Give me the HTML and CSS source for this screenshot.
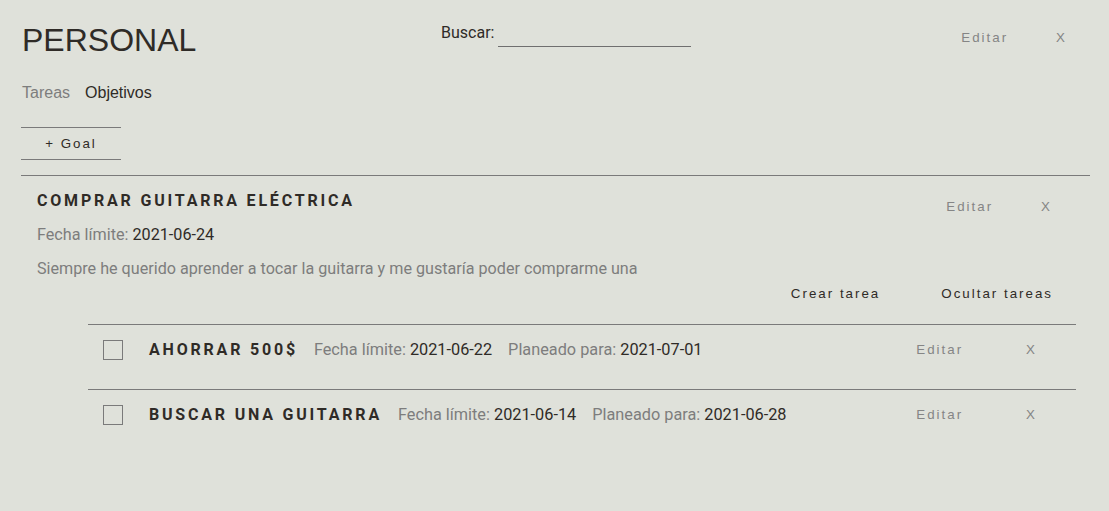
FILE: index.html
```html
<!DOCTYPE html>
<html lang="es">
<head>
<meta charset="utf-8">
<title>Personal</title>
<link rel="stylesheet" href="styles.css">
</head>
<body>
<div class="page">
  <header class="top">
    <h1 class="board-title">PERSONAL</h1>
    <div class="search">
      <label class="search-label" for="q">Buscar:</label>
      <input class="search-input" id="q" type="text">
    </div>
    <div class="actions top-actions">
      <button class="btn btn-muted">Editar</button>
      <button class="btn btn-muted">X</button>
    </div>
  </header>

  <nav class="tabs">
    <span class="tab">Tareas</span>
    <span class="tab tab-active">Objetivos</span>
  </nav>

  <button class="add-goal">+ Goal</button>

  <section class="goal">
    <div class="goal-head">
      <h2 class="goal-title">COMPRAR GUITARRA ELÉCTRICA</h2>
      <div class="actions">
        <button class="btn btn-muted">Editar</button>
        <button class="btn btn-muted">X</button>
      </div>
    </div>
    <p class="meta"><span class="meta-label">Fecha límite:</span> <span class="meta-value">2021-06-24</span></p>
    <p class="desc">Siempre he querido aprender a tocar la guitarra y me gustaría poder comprarme una</p>
    <div class="goal-actions">
      <button class="btn btn-dark">Crear tarea</button>
      <button class="btn btn-dark">Ocultar tareas</button>
    </div>

    <ul class="tasks">
      <li class="task">
        <span class="check"></span>
        <span class="task-title">AHORRAR 500$</span>
        <span class="task-meta"><span class="meta-label">Fecha límite:</span> <span class="meta-value">2021-06-22</span></span>
        <span class="task-meta"><span class="meta-label">Planeado para:</span> <span class="meta-value">2021-07-01</span></span>
        <div class="actions task-actions">
          <button class="btn btn-muted">Editar</button>
          <button class="btn btn-muted">X</button>
        </div>
      </li>
      <li class="task">
        <span class="check"></span>
        <span class="task-title">BUSCAR UNA GUITARRA</span>
        <span class="task-meta"><span class="meta-label">Fecha límite:</span> <span class="meta-value">2021-06-14</span></span>
        <span class="task-meta"><span class="meta-label">Planeado para:</span> <span class="meta-value">2021-06-28</span></span>
        <div class="actions task-actions">
          <button class="btn btn-muted">Editar</button>
          <button class="btn btn-muted">X</button>
        </div>
      </li>
    </ul>
  </section>
</div>
</body>
</html>
```

FILE: styles.css
```css
* { box-sizing: border-box; }

html, body {
  margin: 0;
  padding: 0;
  background: #dfe1da;
}

body {
  font-family: "Liberation Sans", Arial, sans-serif;
  color: #2f2b27;
}

.page {
  padding: 0 19px 0 21px;
}

.search-label,
.meta,
.desc,
.task-meta {
  font-family: "Roboto", "Liberation Sans", sans-serif;
}

/* header */
.top {
  display: flex;
  align-items: flex-start;
}

.board-title {
  margin: 24px 0 0 1px;
  width: 419px;
  font-size: 32px;
  line-height: 32px;
  font-weight: 400;
  color: #2f2b27;
}

.search {
  display: flex;
  align-items: flex-start;
  margin-top: 23px;
}

.search-label {
  font-size: 16px;
  line-height: 20px;
  color: #2f2b27;
}

.search-input {
  width: 193px;
  margin-left: 4px;
  height: 24px;
  border: 0;
  border-bottom: 1px solid #6f6f6f;
  background: transparent;
  padding: 0;
}

.actions {
  display: flex;
  margin-left: auto;
}

.top-actions {
  margin-top: 22px;
  margin-right: -1px;
}

.btn {
  font-family: "Liberation Sans", Arial, sans-serif;
  font-size: 13.333px;
  line-height: 15px;
  letter-spacing: 2px;
  background: none;
  border: 0;
  padding: 8px 24px;
  cursor: pointer;
}

.btn-muted { color: #858585; }
.btn-dark { color: #2f2b27; }

/* tabs */
.tabs {
  display: flex;
  gap: 15px;
  margin-top: 27px;
  margin-left: 1px;
  font-size: 16px;
  line-height: 19px;
}

.tab { color: #7d7d7d; }
.tab-active { color: #2f2b27; }

.add-goal {
  display: block;
  width: 100px;
  margin-top: 25px;
  height: 33px;
  padding: 0;
  background: none;
  border: 0;
  border-top: 1px solid #7a7a7a;
  border-bottom: 1px solid #7a7a7a;
  font-family: "Liberation Sans", Arial, sans-serif;
  font-size: 13.333px;
  letter-spacing: 2px;
  color: #2f2b27;
}

/* goal */
.goal {
  margin-top: 15px;
  border-top: 1px solid #7a7a7a;
  padding: 15px 0 0 16px;
}

.goal-head {
  display: flex;
  align-items: flex-start;
  padding-right: 14px;
}

.goal-title {
  margin: 0;
  font-family: "Roboto", "Liberation Sans", sans-serif;
  font-weight: 700;
  font-size: 16px;
  line-height: 19px;
  letter-spacing: 2.8px;
  color: #2f2b27;
}

.meta {
  margin: 3px 0 0;
  font-size: 16.2px;
  line-height: 20px;
}

.meta-label { color: #7d7d7d; }
.meta-value { color: #2f2b27; }

.desc {
  margin: 14px 0 0;
  font-size: 16.15px;
  line-height: 20px;
  color: #7d7d7d;
}

.goal-actions {
  display: flex;
  justify-content: flex-end;
  gap: 13px;
  padding-right: 13px;
  margin-top: -1px;
}

/* tasks */
.tasks {
  list-style: none;
  margin: 15px 14px 0 51px;
  padding: 0;
}

.task {
  display: flex;
  align-items: center;
  border-top: 1px solid #7a7a7a;
  padding: 9px 15px 24px 15px;
}

.task-actions {
  gap: 15px;
}

.check {
  width: 20px;
  height: 20px;
  border: 1px solid #7a7a7a;
  flex: none;
}

.task-title {
  margin-left: 26px;
  font-family: "Roboto", "Liberation Sans", sans-serif;
  font-weight: 700;
  font-size: 16px;
  letter-spacing: 2.8px;
  color: #2f2b27;
}

.task-meta {
  margin-left: 16px;
  font-size: 16.3px;
  line-height: 20px;
}
```
